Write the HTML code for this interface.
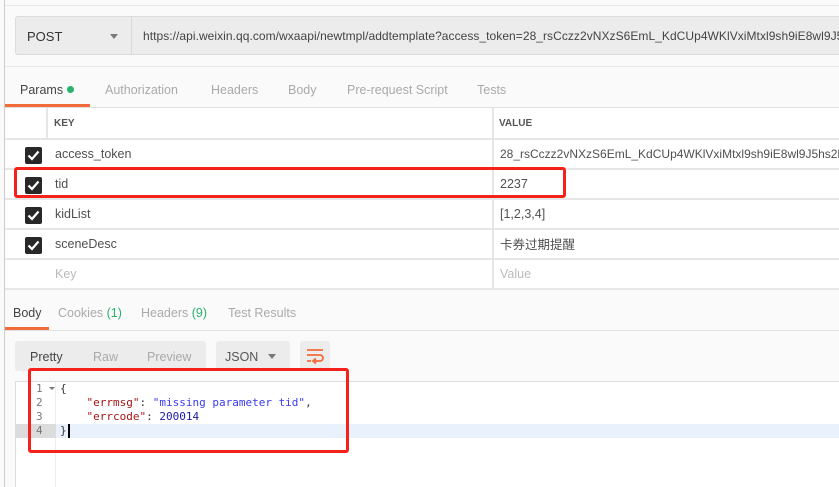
<!DOCTYPE html>
<html><head><meta charset="utf-8"><style>
*{margin:0;padding:0;box-sizing:border-box}
html,body{width:839px;height:487px;overflow:hidden}
body{background:#fafafa;font-family:"Liberation Sans","Noto Sans CJK SC",sans-serif;font-size:12px;color:#505050}
#w{position:relative;width:839px;height:487px;overflow:hidden}
.a{position:absolute}
.t{position:absolute;white-space:nowrap}
.cb{position:absolute;left:25px;width:17px;height:17px;background:#282828;border-radius:2px}
.cb svg{position:absolute;left:2px;top:3px}
.mono{font-family:"DejaVu Sans Mono","Liberation Mono",monospace;font-size:11px}
</style></head><body><div id="w">
<div class="a" style="left:4px;top:0;width:1px;height:487px;background:#ccc"></div>
<div class="a" style="left:5px;top:5px;width:834px;height:1px;background:#e8e8e8"></div>
<div class="a" style="left:15px;top:16px;width:824px;height:39px;background:#ececec;border:1px solid #dcdcdc;border-right:none;border-radius:3px 0 0 3px"></div>
<div class="a" style="left:131px;top:17px;width:1px;height:37px;background:#d8d8d8"></div>
<div class="t" style="left:27px;top:29px;font-size:13px;color:#333">POST</div>
<div class="a" style="left:110px;top:34px;border-left:4px solid transparent;border-right:4px solid transparent;border-top:5px solid #777"></div>
<div class="t" style="left:143px;top:29px;font-size:12px;letter-spacing:0.05px;color:#444">https://api.weixin.qq.com/wxaapi/newtmpl/addtemplate?access_token=28_rsCczz2vNXzS6EmL_KdCUp4WKlVxiMtxl9sh9iE8wl9J5hs2b</div>
<div class="a" style="left:5px;top:66px;width:834px;height:1px;background:#e8e8e8"></div>
<div class="t" style="left:20px;top:83px;font-size:12.5px;color:#444">Params</div>
<div class="a" style="left:67px;top:86px;width:7px;height:7px;border-radius:50%;background:#27b36b"></div>
<div class="t" style="left:105px;top:83px;font-size:12.5px;color:#aaa">Authorization</div>
<div class="t" style="left:211px;top:83px;font-size:12.5px;color:#aaa">Headers</div>
<div class="t" style="left:288px;top:83px;font-size:12.5px;color:#aaa">Body</div>
<div class="t" style="left:347px;top:83px;font-size:12.5px;color:#aaa">Pre-request Script</div>
<div class="t" style="left:477px;top:83px;font-size:12.5px;color:#aaa">Tests</div>
<div class="a" style="left:5px;top:104px;width:85px;height:3px;background:#f26b3a"></div>
<div class="a" style="left:5px;top:107px;width:834px;height:1px;background:#e0e0e0"></div>
<div class="a" style="left:5px;top:108px;width:834px;height:182px;background:#fff"></div>
<div class="a" style="left:46px;top:108px;width:2px;height:32px;background:#e6e6e6"></div>
<div class="a" style="left:492px;top:108px;width:2px;height:182px;background:#e6e6e6"></div>
<div class="t" style="left:54px;top:118px;font-size:10px;font-weight:bold;color:#555">KEY</div>
<div class="t" style="left:499px;top:118px;font-size:10px;font-weight:bold;color:#555">VALUE</div>
<div class="a" style="left:5px;top:138px;width:834px;height:2px;background:#e6e6e6"></div>
<div class="a" style="left:5px;top:168px;width:834px;height:2px;background:#e6e6e6"></div>
<div class="a" style="left:5px;top:198px;width:834px;height:2px;background:#e6e6e6"></div>
<div class="a" style="left:5px;top:228px;width:834px;height:2px;background:#e6e6e6"></div>
<div class="a" style="left:5px;top:258px;width:834px;height:2px;background:#e6e6e6"></div>
<div class="a" style="left:5px;top:288px;width:834px;height:2px;background:#e6e6e6"></div>
<div class="cb" style="top:147px"><svg width="13" height="11" viewBox="0 0 13 11"><path d="M1.5 5.5l3.5 3.5 6.5-7.5" stroke="#fff" stroke-width="2.2" fill="none"/></svg></div>
<div class="cb" style="top:177px"><svg width="13" height="11" viewBox="0 0 13 11"><path d="M1.5 5.5l3.5 3.5 6.5-7.5" stroke="#fff" stroke-width="2.2" fill="none"/></svg></div>
<div class="cb" style="top:207px"><svg width="13" height="11" viewBox="0 0 13 11"><path d="M1.5 5.5l3.5 3.5 6.5-7.5" stroke="#fff" stroke-width="2.2" fill="none"/></svg></div>
<div class="cb" style="top:237px"><svg width="13" height="11" viewBox="0 0 13 11"><path d="M1.5 5.5l3.5 3.5 6.5-7.5" stroke="#fff" stroke-width="2.2" fill="none"/></svg></div>
<div class="t" style="left:55px;top:147px;font-size:12.5px">access_token</div>
<div class="t" style="left:500px;top:147px;font-size:12px">28_rsCczz2vNXzS6EmL_KdCUp4WKlVxiMtxl9sh9iE8wl9J5hs2b</div>
<div class="t" style="left:55px;top:177px;font-size:12.5px">tid</div>
<div class="t" style="left:500px;top:177px;font-size:12.5px">2237</div>
<div class="t" style="left:55px;top:207px;font-size:12.5px">kidList</div>
<div class="t" style="left:500px;top:207px;font-size:12.5px">[1,2,3,4]</div>
<div class="t" style="left:55px;top:237px;font-size:12.5px">sceneDesc</div>
<div class="t" style="left:500px;top:234px;font-size:12.5px">卡券过期提醒</div>
<div class="t" style="left:55px;top:267px;font-size:12.5px;color:#bbb">Key</div>
<div class="t" style="left:500px;top:267px;font-size:12.5px;color:#bbb">Value</div>
<div class="a" style="left:14px;top:167px;width:552px;height:31px;border:3px solid #f5211b;border-radius:3px"></div>
<div class="t" style="left:13px;top:306px;font-size:12.5px;color:#444">Body</div>
<div class="t" style="left:58px;top:306px;font-size:12.5px;color:#aaa">Cookies <span style="color:#27b36b">(1)</span></div>
<div class="t" style="left:141px;top:306px;font-size:12.5px;color:#aaa">Headers <span style="color:#27b36b">(9)</span></div>
<div class="t" style="left:228px;top:306px;font-size:12.5px;color:#aaa">Test Results</div>
<div class="a" style="left:5px;top:327px;width:44px;height:3px;background:#f26b3a"></div>
<div class="a" style="left:5px;top:330px;width:834px;height:1px;background:#e0e0e0"></div>
<div class="a" style="left:15px;top:341px;width:191px;height:30px;background:#ececec;border-radius:3px"></div>
<div class="t" style="left:30px;top:350px;font-size:12.5px;color:#444">Pretty</div>
<div class="t" style="left:93px;top:350px;font-size:12.5px;color:#aaa">Raw</div>
<div class="t" style="left:147px;top:350px;font-size:12.5px;color:#aaa">Preview</div>
<div class="a" style="left:216px;top:341px;width:74px;height:30px;background:#ececec;border-radius:3px"></div>
<div class="t" style="left:225px;top:350px;font-size:12.5px;color:#555">JSON</div>
<div class="a" style="left:268px;top:354px;border-left:4px solid transparent;border-right:4px solid transparent;border-top:5px solid #777"></div>
<div class="a" style="left:300px;top:341px;width:30px;height:30px;background:#ececec;border-radius:3px"></div>
<svg class="a" style="left:306px;top:348px" width="19" height="17" viewBox="0 0 19 17"><path d="M1 2h16M1 7h13a3 3 0 0 1 0 6H8M10 10.5l-3 2.5 3 2.5M1 13h4" stroke="#f26b3a" stroke-width="1.8" fill="none"/></svg>
<div class="a" style="left:15px;top:381px;width:824px;height:106px;background:#fff;border-top:1px solid #ddd;border-left:1px solid #ddd"></div>
<div class="a" style="left:16px;top:382px;width:40px;height:105px;background:#fff;border-right:1px solid #eee"></div>
<div class="a" style="left:56px;top:424px;width:783px;height:14px;background:#e8f1fc"></div>
<div class="a" style="left:16px;top:424px;width:40px;height:14px;background:#dcdcdc"></div>
<div class="t mono" style="left:36px;top:382px;color:#777;line-height:14px">1<br>2<br>3<br>4</div>
<div class="a" style="left:49px;top:387px;border-left:3px solid transparent;border-right:3px solid transparent;border-top:3px solid #777"></div>
<div class="t mono" style="left:60px;top:382px;line-height:14px;color:#333">{<br>&nbsp;&nbsp;&nbsp;&nbsp;<span style="color:#a31515">"errmsg"</span>: <span style="color:#3a3af0">"missing parameter tid"</span>,<br>&nbsp;&nbsp;&nbsp;&nbsp;<span style="color:#a31515">"errcode"</span>: <span style="color:#1a1aa6">200014</span><br>}</div>
<div class="a" style="left:68px;top:424px;width:1.5px;height:14px;background:#000"></div>
<div class="a" style="left:28px;top:368px;width:321px;height:85px;border:3px solid #f5211b;border-radius:3px"></div>
</div></body></html>
